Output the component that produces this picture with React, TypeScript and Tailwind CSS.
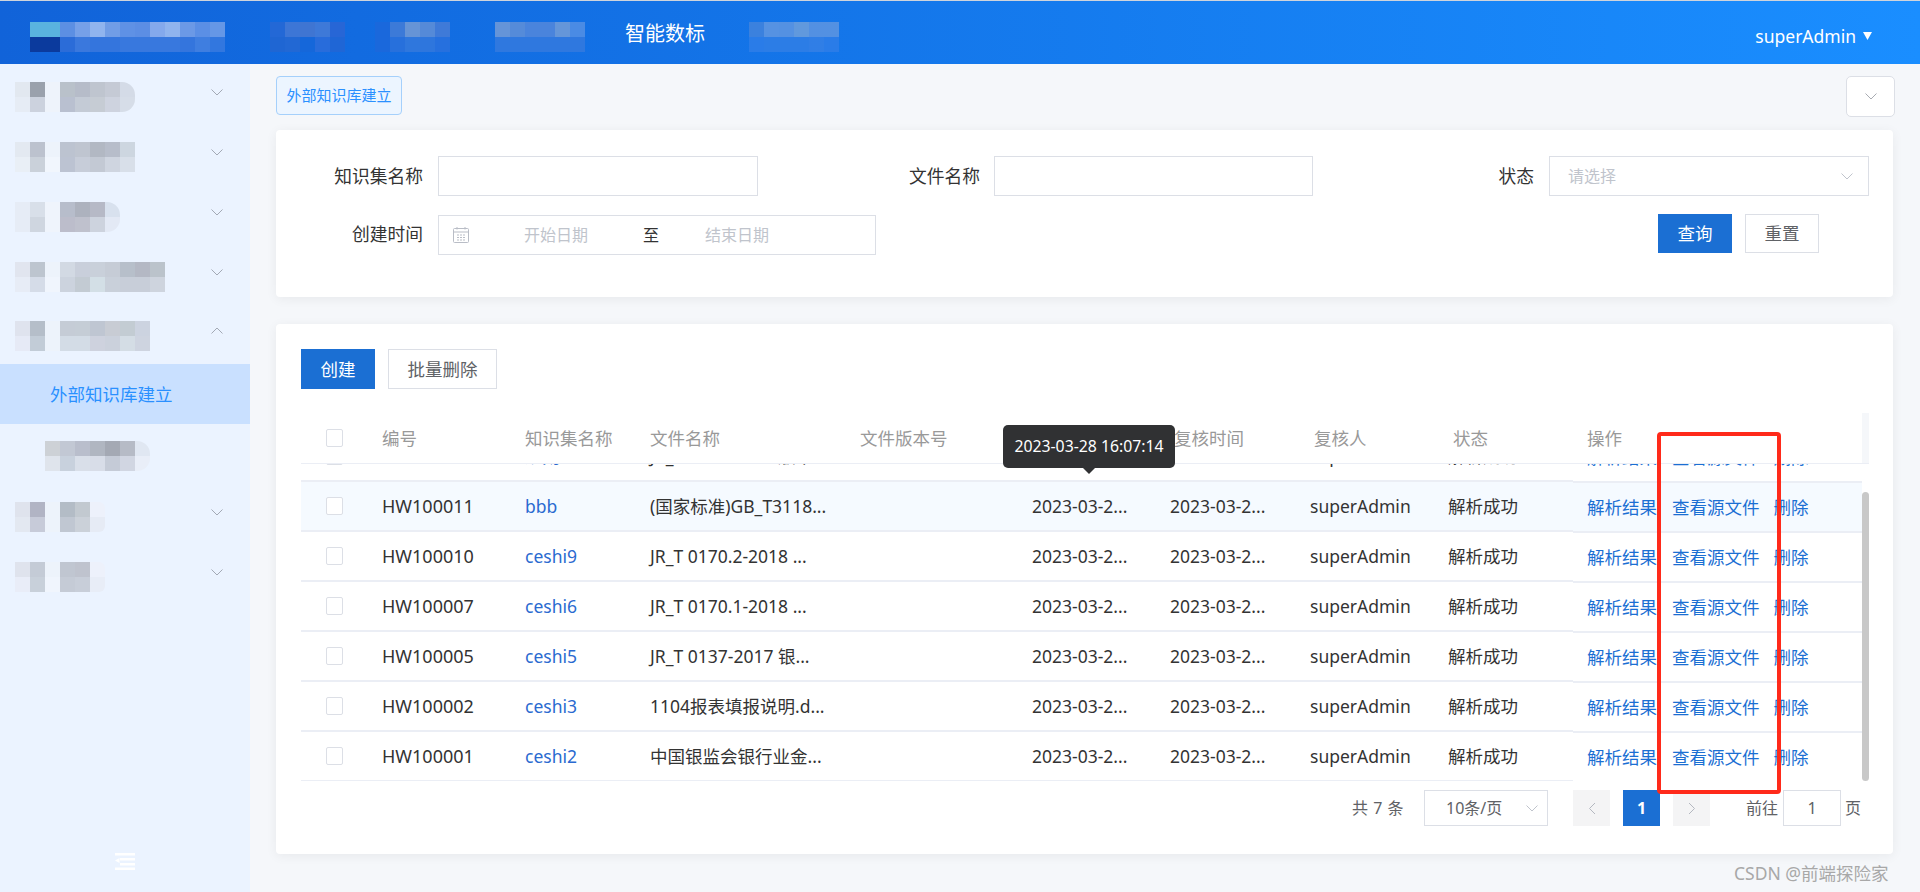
import React from 'react';

type MosaicProps = {
  rows: string[][];
  cell?: number;
  className?: string;
};

// pixelated (redacted) labels in the screenshot
function Mosaic({ rows, cell = 15, className = '' }: MosaicProps) {
  const w = rows[0].length * cell;
  const h = rows.length * cell;
  return (
    <svg width={w} height={h} viewBox={`0 0 ${w} ${h}`} shapeRendering="crispEdges" className={`shrink-0 ${className}`}>
      {rows.map((row, y) =>
        row.map((fill, x) => <rect key={`${x}-${y}`} x={x * cell} y={y * cell} width={cell} height={cell} fill={fill} />)
      )}
    </svg>
  );
}

function Chevron({ up = false, className = '' }: { up?: boolean; className?: string }) {
  return (
    <svg width="12" height="7" viewBox="0 0 12 7" fill="none" className={className}>
      <path d={up ? 'M0.5 6.5L6 1l5.5 5.5' : 'M0.5 0.5L6 6l5.5-5.5'} stroke="currentColor" strokeWidth="1" />
    </svg>
  );
}

const logo = [
  ['#5ab3df', '#5ab3df', '#5c8fe3', '#76a0e8', '#90b4ee', '#719de6', '#5f91e5', '#5c8ee4', '#84a9ec', '#90b4ee', '#6b99e6', '#5b8fe5', '#6597e6'],
  ['#0b3a9d', '#0b3a9d', '#2b6cd8', '#3a78dd', '#3475dd', '#3475dd', '#3878de', '#3878de', '#3878de', '#3878de', '#3475dd', '#3f7ee0', '#3277df'],
];
const nav1 = [
  ['#2368d6', '#3d76d6', '#3f75d2', '#3e79d8', '#2766d6'],
  ['#1f66d3', '#2268d4', '#1567da', '#286cdb', '#1f66d6'],
];
const nav2 = [
  ['#1a68dc', '#3c7ad8', '#6694d6', '#558ad8', '#3f7ad8'],
  ['#1a68dc', '#2770dc', '#2f77dd', '#2e76dd', '#2670de'],
];
const nav3 = [
  ['#6594d8', '#558bd9', '#4a84dc', '#4a84dc', '#6596d9', '#4a8be4'],
  ['#2f78df', '#2f78df', '#2f78df', '#2f78df', '#2f78df', '#2f78df'],
];
const nav4 = [
  ['#4083dd', '#5e96e2', '#5c95e2', '#6a9ddc', '#5a94e2', '#5a94e2'],
  ['#2d7de8', '#2f7ee6', '#2f7ee6', '#2f7ee6', '#3480e6', '#2d7de8'],
];

const menuBefore = [
  {
    rows: [
      ['#e2e8f0', '#9aa1ac', '#eef3fb', '#b9c1ca', '#b6bcc9', '#bfc5cf', '#c5cad5', '#d4dbe7'],
      ['#e6ecf5', '#ccd2de', '#eef3fb', '#b9c0d0', '#c4cbd6', '#c6ccd4', '#ced3df', '#d6dde8'],
    ],
    round: true,
  },
  {
    rows: [
      ['#e3e9f1', '#bcc2ce', '#edf3fb', '#bcc3d0', '#bfc5d0', '#b2b8c3', '#b7bdca', '#cdd6e0'],
      ['#e9eff6', '#cad1da', '#f1f6fd', '#bcc3d2', '#c7cdd9', '#c3c9d4', '#cfd5e0', '#d8dfe9'],
    ],
    round: false,
  },
  {
    rows: [
      ['#e6ecf6', '#d8dfe9', '#eff4fc', '#b7bdcb', '#adb2be', '#b6b9c6', '#d8e1ee'],
      ['#e6ecf6', '#cfd6e0', '#eff4fc', '#bcbdcb', '#bfc1cd', '#cdd3de', '#e3e9f5'],
    ],
    round: true,
  },
  {
    rows: [
      ['#e1e5ef', '#bdc5cf', '#edf3fb', '#d2d9e3', '#c9cfdb', '#c9d0da', '#c6ccd6', '#b7bfca', '#b4b8c4', '#bbc3cb'],
      ['#e7ecf6', '#d5dce8', '#f0f5fd', '#ccd3de', '#c3cbd3', '#d3dfe6', '#c9d0da', '#c8ced9', '#c8ced9', '#ced4de'],
    ],
    round: false,
  },
];
const menuOpen = [
  ['#dfe3ee', '#b5bec9', '#edf3fb', '#c5ccd6', '#c5cdd6', '#bfc6d2', '#c8ccd4', '#c3ccd3', '#ccd3e0'],
  ['#e6eaf6', '#c2ccd7', '#edf3fb', '#d3dce6', '#d3dce6', '#ced2de', '#cbd1dc', '#d4dde5', '#ced4e0'],
];
const menuSub = [
  ['#cdd1d6', '#c2c8d4', '#b9becc', '#b0b6c1', '#a4a9b4', '#b6bbc6', '#e0e7f2'],
  ['#dfe4ec', '#c8d1dd', '#d9dfe9', '#d8dde8', '#c5cbd7', '#d1d6e2', '#e9eef8'],
];
const menuAfter = [
  [
    ['#dfe3ed', '#b1b4c4', '#edf3fb', '#b3bcc6', '#c2c9d0', '#edf1fb'],
    ['#e3e8f1', '#c7cbd9', '#edf3fb', '#c0c7d2', '#cbd1d9', '#e6ebf5'],
  ],
  [
    ['#dfe3ed', '#c4cbd6', '#edf3fb', '#c0c6d1', '#bfc3ce', '#edf1fb'],
    ['#e9edf8', '#c8d0da', '#f0f5fd', '#c5cbd6', '#c8ced9', '#e8edf7'],
  ],
];

const rows = [
  { id: 'HW100012', name: '规则', file: 'JR_T 0171-2020 版本...', hover: false },
  { id: 'HW100011', name: 'bbb', file: '(国家标准)GB_T3118...', hover: true },
  { id: 'HW100010', name: 'ceshi9', file: 'JR_T 0170.2-2018 ...', hover: false },
  { id: 'HW100007', name: 'ceshi6', file: 'JR_T 0170.1-2018 ...', hover: false },
  { id: 'HW100005', name: 'ceshi5', file: 'JR_T 0137-2017 银...', hover: false },
  { id: 'HW100002', name: 'ceshi3', file: '1104报表填报说明.d...', hover: false },
  { id: 'HW100001', name: 'ceshi2', file: '中国银监会银行业金...', hover: false },
];

function Checkbox() {
  return <span className="ml-[25px] block h-[18px] w-[17px] rounded-[2px] border border-[#dcdfe6] bg-white" />;
}

export default function App() {
  return (
    <div
      className="relative flex h-[892px] w-[1920px] flex-col overflow-hidden bg-[#f5f7fa] text-[17.5px] text-[#333]"
      style={{ fontFamily: '"Noto Sans", "Noto Sans CJK SC", sans-serif' }}
    >
      {/* Header */}
      <header className="flex h-[64px] shrink-0 items-start border-t border-[#cfd4dc] bg-linear-to-r from-[#1163d9] to-[#1a8eff] pl-[30px] pr-[48px] pt-[21px] text-white">
        <Mosaic rows={logo} />
        <Mosaic rows={nav1} className="ml-[45px]" />
        <Mosaic rows={nav2} className="ml-[30px]" />
        <Mosaic rows={nav3} className="ml-[45px]" />
        <span className="ml-[40px] text-[20px] leading-[24px]">智能数标</span>
        <Mosaic rows={nav4} className="ml-[44px] opacity-90" />
        <div className="ml-auto mt-[2px] flex items-center gap-[7px] leading-[24px]">
          <span>superAdmin</span>
          <svg width="9" height="8" viewBox="0 0 9 8" fill="currentColor">
            <path d="M0 0h9L4.500 8z" />
          </svg>
        </div>
      </header>

      <div className="flex min-h-0 flex-1">
        {/* Sidebar */}
        <aside className="flex w-[250px] shrink-0 flex-col bg-[#ebf3ff] pt-[3px]">
          {menuBefore.map((m, i) => (
            <div key={i} className="flex h-[60px] items-center pl-[15px] pr-[27px] text-[#a3a9b5]">
              <Mosaic rows={m.rows} className={m.round ? 'rounded-r-[13px]' : ''} />
              <Chevron className="mb-[10px] ml-auto" />
            </div>
          ))}
          <div className="flex h-[57px] items-center pl-[15px] pr-[27px] text-[#a3a9b5]">
            <Mosaic rows={menuOpen} />
            <Chevron up className="mb-[10px] ml-auto" />
          </div>
          <div className="flex h-[60px] items-center bg-[#c9e0ff] pl-[50px] text-[#2a90ff]">外部知识库建立</div>
          <div className="flex h-[63px] items-center pl-[45px]">
            <Mosaic rows={menuSub} className="rounded-r-[13px]" />
          </div>
          {menuAfter.map((m, i) => (
            <div key={i} className="flex h-[60px] items-center pl-[15px] pr-[27px] text-[#a3a9b5]">
              <Mosaic rows={m} className="rounded-r-[6px]" />
              <Chevron className="mb-[10px] ml-auto" />
            </div>
          ))}
          <div className="mt-auto flex justify-center pb-[22px]">
            <svg width="20" height="17" viewBox="0 0 20 17" fill="#fff">
              <rect x="0" y="0" width="20" height="2.500" />
              <rect x="5" y="5" width="15" height="2.500" />
              <rect x="5" y="10" width="15" height="2.500" />
              <rect x="0" y="14.500" width="20" height="2.500" />
              <path d="M0 7.500L4.500 5v5z" />
            </svg>
          </div>
        </aside>

        {/* Main */}
        <main className="min-w-0 flex-1 pl-[26px] pr-[27px] pt-[12px]">
          <div className="flex h-[41px] items-start justify-between">
            <span className="flex h-[39px] w-[126px] items-center justify-center rounded-[4px] border border-[#a5d0fb] bg-[#ecf5ff] text-[15px] text-[#2a90ff]">
              外部知识库建立
            </span>
            <span className="-mr-[2px] flex h-[41px] w-[49px] items-center justify-center rounded-[5px] border border-[#dcdfe6] bg-white text-[#a8abb2]">
              <Chevron />
            </span>
          </div>

          {/* Search form */}
          <section className="mt-[13px] h-[167px] rounded-[4px] bg-white pt-[26px] shadow-[0_2px_12px_rgba(0,0,0,0.06)]">
            <div className="flex h-[40px] items-center text-[17.75px]">
              <label className="w-[147px] text-right">知识集名称</label>
              <span className="ml-[15px] h-[40px] w-[320px] border border-[#dcdfe6]" />
              <label className="w-[222px] text-right">文件名称</label>
              <span className="ml-[14px] h-[40px] w-[319px] border border-[#dcdfe6]" />
              <label className="w-[221px] text-right">状态</label>
              <span className="ml-[15px] flex h-[40px] w-[320px] items-center justify-between border border-[#dcdfe6] pl-[18px] pr-[15px] text-[16px] text-[#c0c4cc]">
                请选择
                <Chevron className="text-[#c0c4cc]" />
              </span>
            </div>
            <div className="mt-[19px] flex h-[40px] items-start">
              <label className="w-[147px] pt-[6px] text-right text-[17.75px]">创建时间</label>
              <div className="ml-[15px] flex h-[40px] w-[438px] items-center border border-[#dcdfe6] pl-[14px] text-[16px] text-[#c0c4cc]">
                <svg width="16" height="16" viewBox="0 0 16 16" fill="none" stroke="#b9bdc6">
                  <rect x="0.500" y="1.500" width="15" height="14" rx="1" />
                  <path d="M0.500 5h15M4 0v2.500M12 0v2.500" />
                  <path d="M4 8h8M4 10.500h8M4 13h8" strokeDasharray="2 1" />
                </svg>
                <span className="ml-[55px] whitespace-nowrap">开始日期</span>
                <span className="ml-[55px] text-[#333]">至</span>
                <span className="ml-[46px] whitespace-nowrap">结束日期</span>
              </div>
              <div className="ml-auto mr-[74px] flex gap-[13px]">
                <button className="-mt-[1px] h-[39px] w-[74px] bg-[#1b6fd3] text-white">查询</button>
                <button className="-mt-[1px] h-[39px] w-[74px] border border-[#dcdfe6] text-[#606266]">重置</button>
              </div>
            </div>
          </section>

          {/* Table card */}
          <section className="mt-[27px] h-[530px] rounded-[4px] bg-white pl-[25px] pt-[25px] shadow-[0_2px_12px_rgba(0,0,0,0.06)]">
            <div className="flex gap-[13px]">
              <button className="h-[40px] w-[74px] bg-[#1b6fd3] text-white">创建</button>
              <button className="h-[40px] w-[109px] border border-[#dcdfe6] text-[#606266]">批量删除</button>
            </div>

            <div className="mt-[24px] w-[1568px]">
              <div className="flex h-[50px] items-center text-[#999]">
                <div className="flex w-[67px] items-center"><Checkbox /></div>
                <div className="w-[143px] px-[14px]">编号</div>
                <div className="w-[125px] px-[14px]">知识集名称</div>
                <div className="w-[209px] px-[14px]">文件名称</div>
                <div className="w-[172px] px-[15px]">文件版本号</div>
                <div className="w-[139px] px-[15px]">创建时间</div>
                <div className="w-[140px] px-[18px]">复核时间</div>
                <div className="w-[139px] px-[18px]">复核人</div>
                <div className="w-[138px] px-[18px]">状态</div>
                <div className="w-[289px] px-[14px]">操作</div>
                <div className="h-full w-[7px] bg-[#f5f7fa]" />
              </div>

              <div className="flex h-[318px] overflow-hidden border-t border-[#ebeef5]">
                <div className="-mt-[32px] w-[1272px] shrink-0">
                  {rows.map((r) => (
                    <div key={r.id} className={`flex h-[50px] items-center border-b-2 border-[#ebeef5] ${r.hover ? 'bg-[#f5faff]' : ''}`}>
                      <div className="flex w-[67px] items-center"><Checkbox /></div>
                      <div className="w-[143px] px-[14px] text-[18px]">{r.id}</div>
                      <div className="w-[125px] px-[14px] text-[#2a6ad0]">{r.name}</div>
                      <div className="w-[209px] whitespace-nowrap px-[14px]">{r.file}</div>
                      <div className="w-[172px]" />
                      <div className="w-[139px] whitespace-nowrap px-[15px]">2023-03-2...</div>
                      <div className="w-[140px] whitespace-nowrap px-[14px]">2023-03-2...</div>
                      <div className="w-[139px] px-[14px]">superAdmin</div>
                      <div className="w-[138px] px-[13px]">解析成功</div>
                    </div>
                  ))}
                </div>
                <div className="-mt-[31px] w-[289px] shrink-0">
                  {rows.map((r) => (
                    <div key={r.id} className={`flex h-[50px] items-center gap-[14px] border-b-2 border-[#ebeef5] pl-[14px] text-[#1b6fd3] ${r.hover ? 'bg-[#f5faff]' : ''}`}>
                      <span className="mr-[1px]">解析结果</span>
                      <span>查看源文件</span>
                      <span>删除</span>
                    </div>
                  ))}
                </div>
                <div className="flex-1 pt-[28px]">
                  <div className="h-[289px] w-[7px] rounded-[4px] bg-[#c8c8c8]" />
                </div>
              </div>

              {/* Pagination */}
              <div className="mt-[9px] flex h-[36px] items-center pl-[1051px] text-[16px] text-[#606266]">
                <span className="w-[52px] whitespace-nowrap tracking-[0.5px]">共 7 条</span>
                <span className="ml-[20px] flex h-[36px] w-[124px] items-center justify-between border border-[#dcdfe6] pl-[21px] pr-[9px]">
                  10条/页
                  <Chevron className="text-[#c0c4cc]" />
                </span>
                <span className="ml-[25px] flex h-[36px] w-[37px] items-center justify-center bg-[#f4f4f5] text-[#b4b8c0]">
                  <Chevron className="rotate-90" />
                </span>
                <span className="ml-[13px] flex h-[36px] w-[37px] items-center justify-center bg-[#1b6fd3] font-bold text-white">1</span>
                <span className="ml-[13px] flex h-[36px] w-[37px] items-center justify-center bg-[#f4f4f5] text-[#b4b8c0]">
                  <Chevron className="-rotate-90" />
                </span>
                <span className="ml-[36px] whitespace-nowrap">前往</span>
                <span className="ml-[5px] flex h-[36px] w-[58px] items-center justify-center border border-[#dcdfe6]">1</span>
                <span className="ml-[4px]">页</span>
              </div>
            </div>
          </section>
        </main>
      </div>

      {/* Tooltip over the table header */}
      <div className="absolute left-[1003px] top-[425px] flex h-[43px] w-[172px] items-center justify-center rounded-[5px] bg-[#303133] text-[15.8px] text-white">
        2023-03-28 16:07:14
        <span className="absolute left-[80px] top-[43px] border-x-[6px] border-t-[6px] border-x-transparent border-t-[#303133]" />
      </div>

      {/* Annotation box */}
      <div className="absolute left-[1657px] top-[432px] h-[362px] w-[124px] rounded-[4px] border-4 border-[#ff2a1a]" />

      {/* Watermark */}
      <div className="absolute left-[1734px] top-[862px] whitespace-nowrap text-[17.500px] leading-[22px] text-[#a8a8a8]">CSDN @前端探险家</div>
    </div>
  );
}
